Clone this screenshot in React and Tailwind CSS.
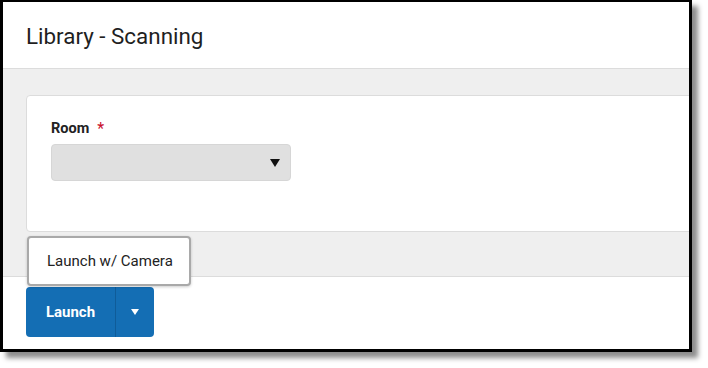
export default function App() {
  return (
    <div className="w-[708px] h-[368px] bg-white font-['Roboto',sans-serif] overflow-hidden">
      <div className="w-[692px] h-[352px] border-t-2 border-x-[3px] border-b-[3px] border-black shadow-[6px_6px_5px_rgba(0,0,0,0.45)] flex flex-col overflow-hidden bg-white">
        {/* Header */}
        <div className="h-[67px] shrink-0 border-b border-[#dcdcdc] flex items-center pl-[23px] pt-[2px]">
          <h1 className="text-[22.4px] text-[#1f1f1f] leading-none">Library - Scanning</h1>
        </div>

        {/* Body */}
        <div className="h-[208px] shrink-0 bg-[#efefef] pt-[26px] pl-[23px] border-b border-[#dcdcdc]">
          <div className="h-[137px] w-[700px] bg-white border border-[#dcdcdc] rounded-[4px] pt-[25px] pl-[24px]">
            <div className="flex items-center gap-[8px] text-[14.5px] font-bold text-[#222] leading-none h-[16px]">
              Room <span className="text-[#c8102e] font-normal text-[16px]">*</span>
            </div>
            <div className="mt-[7px] w-[240px] h-[37px] bg-[#e0e0e0] border border-[#d6d6d6] rounded-[4px] flex items-center justify-end pr-[10px]">
              <svg width="10" height="8" viewBox="0 0 10 8">
                <path d="M0 0 L10 0 L5 8 Z" fill="#111" />
              </svg>
            </div>
          </div>
        </div>

        {/* Footer */}
        <div className="relative flex-1 pl-[23px] pt-[10px]">
          <div className="absolute left-[24px] top-[-41px] w-[164px] h-[50px] bg-white border-2 border-[#a9a9a9] rounded-[4px] shadow-[0_1px_3px_rgba(0,0,0,0.2)] flex items-center pl-[18px]">
            <span className="text-[15px] text-[#222]">Launch w/ Camera</span>
          </div>
          <div className="flex w-[128px] h-[50px] rounded-[4px] bg-[#146eb4] text-white overflow-hidden">
            <div className="w-[89px] flex items-center justify-center text-[15px] font-bold">Launch</div>
            <div className="flex-1 border-l border-[#0f5c99] flex items-center justify-center">
              <svg width="8" height="6" viewBox="0 0 8 6">
                <path d="M0 0 L8 0 L4 6 Z" fill="#fff" />
              </svg>
            </div>
          </div>
        </div>
      </div>
    </div>
  );
}
